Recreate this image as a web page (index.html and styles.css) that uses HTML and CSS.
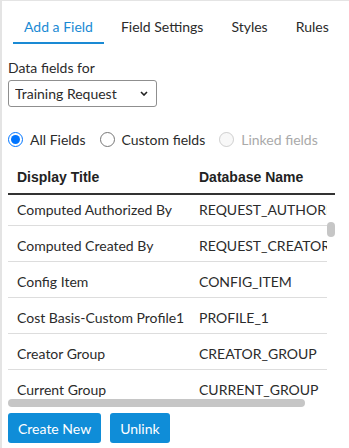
FILE: index.html
```html
<!DOCTYPE html>
<html lang="en">
<head>
  <meta charset="UTF-8">
  <meta name="viewport" content="width=device-width, initial-scale=1.0">
  <title>Form Designer - Fields</title>
  <link rel="stylesheet" href="styles.css">
</head>
<body>
  <div class="panel">
    <ul class="tabs">
      <li class="tab active">Add a Field</li>
      <li class="tab">Field Settings</li>
      <li class="tab">Styles</li>
      <li class="tab">Rules</li>
    </ul>

    <div class="pane">
      <label class="field-label" for="formSelect">Data fields for</label>
      <div class="select-wrap">
        <select id="formSelect" class="select">
          <option>Training Request</option>
          <option>Change Request</option>
          <option>Incident</option>
        </select>
        <svg class="select-arrow" width="8" height="5" viewBox="0 0 8 5">
          <path d="M1 1l3 3 3-3" fill="none" stroke="#222" stroke-width="1.6"/>
        </svg>
      </div>

      <div class="filters">
        <label class="radio"><input type="radio" name="scope" checked> All Fields</label>
        <label class="radio"><input type="radio" name="scope"> Custom fields</label>
        <label class="radio disabled"><input type="radio" name="scope" disabled> Linked fields</label>
      </div>

      <div class="grid">
        <table class="grid-head">
          <colgroup><col class="col-title"><col></colgroup>
          <tr>
            <th>Display Title</th>
            <th>Database Name</th>
          </tr>
        </table>
        <div class="grid-body">
          <div class="grid-view">
            <table>
              <colgroup><col class="col-title"><col></colgroup>
              <tr><td>Computed Authorized By</td><td>REQUEST_AUTHORIZED_BY</td></tr>
              <tr><td>Computed Created By</td><td>REQUEST_CREATOR</td></tr>
              <tr><td>Config Item</td><td>CONFIG_ITEM</td></tr>
              <tr><td>Cost Basis-Custom Profile1</td><td>PROFILE_1</td></tr>
              <tr><td>Creator Group</td><td>CREATOR_GROUP</td></tr>
              <tr><td>Current Group</td><td>CURRENT_GROUP</td></tr>
              <tr><td>Current Owner</td><td>CURRENT_OWNER</td></tr>
            </table>
          </div>
          <div class="vscroll"><div class="thumb"></div></div>
          <div class="hscroll"><div class="thumb"></div></div>
        </div>
      </div>
    </div>

    <div class="actions">
      <button class="btn">Create New</button>
      <button class="btn">Unlink</button>
    </div>
  </div>
</body>
</html>
```

FILE: styles.css
```css
html, body {
  margin: 0;
  padding: 0;
  background: #fff;
}
body {
  font-family: 'Lato', 'Liberation Sans', Arial, sans-serif;
  color: #2b2b2b;
  font-size: 14px;
}
.panel {
  height: 448px;
  box-sizing: border-box;
  border-left: 2px solid #e4e4e4;
  border-top: 1px solid #e4e4e4;
  padding: 0 14px 0 6px;
}

/* tabs */
.tabs {
  list-style: none;
  margin: 0 0 0 5px;
  padding: 0;
  display: flex;
  gap: 6px;
}
.tab {
  padding: 17px 11px 6px 11px;
  line-height: 18px;
  font-size: 14px;
  color: #2b2b2b;
  border-bottom: 2px solid transparent;
  white-space: nowrap;
}
.tab.active {
  color: #1a8ad4;
  border-bottom-color: #1a8ad4;
}

/* form bits */
.pane {
  padding-top: 14px;
}
.field-label {
  display: block;
  line-height: 20px;
  font-size: 14px;
  margin-bottom: 2px;
}
.select-wrap {
  position: relative;
  width: 149px;
}
.select {
  appearance: none;
  -webkit-appearance: none;
  width: 149px;
  height: 27px;
  box-sizing: border-box;
  border: 1px solid #8f8f8f;
  border-radius: 3px;
  background: #fff;
  font-family: inherit;
  font-size: 14px;
  color: #2b2b2b;
  padding: 0 20px 0 6px;
  display: block;
}
.select-arrow {
  position: absolute;
  right: 9px;
  top: 11px;
  pointer-events: none;
}
.filters {
  display: flex;
  align-items: center;
  gap: 14px;
  margin-top: 22px;
  height: 20px;
  margin-bottom: 7px;
}
.radio {
  display: flex;
  align-items: center;
  font-size: 14px;
  white-space: nowrap;
}
.radio input {
  width: 15px;
  height: 15px;
  margin: 0 7px 0 0;
}
.radio.disabled {
  color: #aaa;
}

/* field grid */
.grid table {
  border-collapse: collapse;
  table-layout: fixed;
}
.col-title {
  width: 182px;
}
.grid-head {
  width: 327px;
}
.grid-head th {
  font-family: 'Liberation Sans', Arial, sans-serif;
  font-weight: bold;
  font-size: 14px;
  text-align: left;
  color: #222;
  padding: 13px 9px 8px 9px;
  line-height: 16px;
  border-bottom: 2px solid #333;
}
.grid-body {
  display: grid;
  grid-template-columns: 319px 8px;
  grid-template-rows: 204px 8px;
}
.grid-view {
  overflow: hidden;
}
.grid-view table {
  width: 343px;
  margin-top: -5px;
}
.grid-view td {
  font-size: 14px;
  padding: 12px 9px 7px 9px;
  line-height: 16px;
  border-bottom: 1px solid #ddd;
  white-space: nowrap;
  overflow: hidden;
}
.thumb {
  background: #c6c6c6;
  border-radius: 4px;
}
.vscroll .thumb {
  margin-top: 27px;
  height: 15px;
}
.hscroll {
  grid-column: 1;
}
.hscroll .thumb {
  width: 297px;
  height: 8px;
}

/* buttons */
.actions {
  display: flex;
  gap: 9px;
  margin-top: 6px;
}
.btn {
  height: 30px;
  padding: 0 10px;
  border: none;
  border-radius: 3px;
  background: #0f8dd8;
  color: #fff;
  font-family: inherit;
  font-size: 14px;
}
```
